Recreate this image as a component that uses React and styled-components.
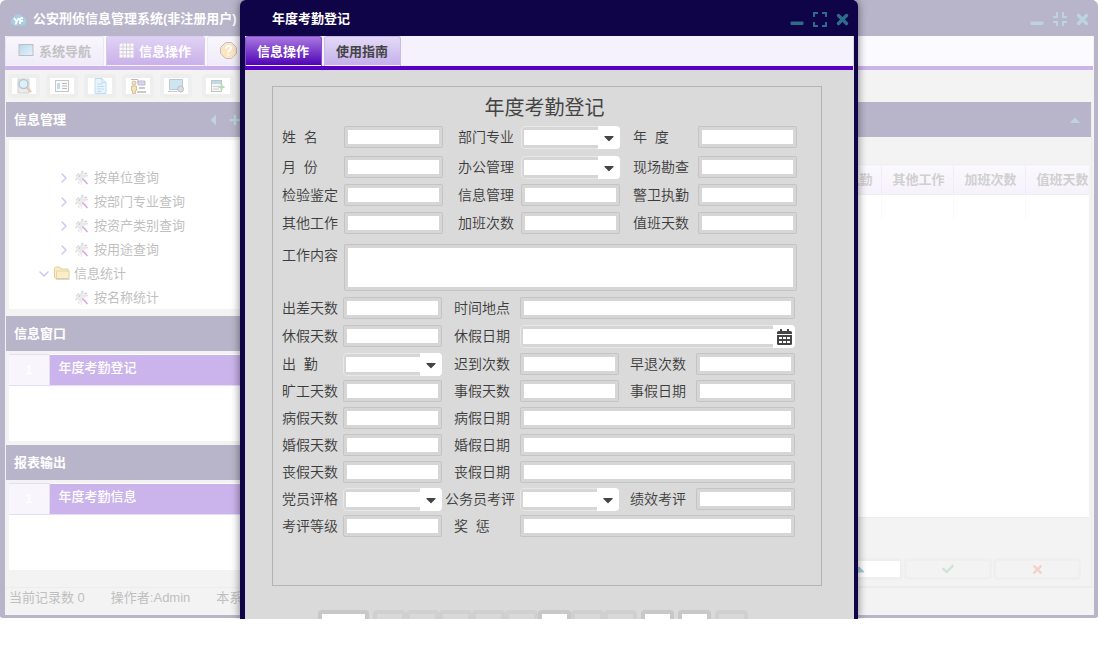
import React, { useState } from 'react'
import styled, { createGlobalStyle, css } from 'styled-components'
import {
  FaCaretDown,
  FaCaretLeft,
  FaCaretUp,
  FaCheck,
  FaPlus,
  FaTimes,
} from 'react-icons/fa'
import { ChevronDown, ChevronRight } from 'lucide-react'

//#region styles
const GlobalStyle = createGlobalStyle`
  * {
    box-sizing: border-box;
  }

  body {
    margin: 0;
    background: #fff;
    color: #444;
    font: 13px/20px 'Liberation Sans', 'Noto Sans CJK SC', sans-serif;
  }

  button, input, select, textarea {
    margin: 0;
    padding: 0;
    border: 0;
    border-radius: 0;
    font: inherit;
    color: inherit;
    background: none;
  }
`

const Desktop = styled.div`
  position: relative;
  overflow: hidden;
  padding-bottom: 1px;
`

const AppWindow = styled.div`
  margin-right: 1px;
  border: solid #b8b5ca;
  border-width: 0 4px 3px 5px;
  border-radius: 6px 6px 3px 3px;
  background: #f3f3f3;
`

const TitleBar = styled.header`
  display: flex;
  align-items: center;
  height: 36px;
  padding: ${(p) => (p.$dialog ? '2px 5px 0 27px' : '2px 5px 0 5px')};
  background: ${(p) => (p.$dialog ? '#100448' : '#b8b5ca')};
  color: #fff;

  > h1 {
    flex: 1;
    margin: 0;
    font-size: 13px;
    font-weight: bold;
    white-space: nowrap;
  }

  > svg {
    margin-right: 6px;
  }
`

const WindowButtons = styled.div`
  display: flex;
  gap: 8px;
  color: ${(p) => (p.$dialog ? '#2c6d8c' : '#bcd4de')};

  > button {
    display: flex;
  }
`

const TabBar = styled.nav`
  display: flex;
  gap: 2px;
  height: 34px;
  margin-right: 1px;
  border-bottom: 4px solid ${(p) => (p.$dialog ? '#5500c3' : '#cbb4eb')};
  background: ${(p) => (p.$dialog ? '#f5f2fd' : '#fbfafe')};
`

const tabLooks = {
  active: css`
    background: linear-gradient(#a878e0, #4c00b4);
    border-color: #8a50d0;
    color: #fff;
  `,
  idle: css`
    background: linear-gradient(#e4daf7, #c4aeea);
    border-color: #cbb8ec;
    color: #444;
  `,
  fadedActive: css`
    background: linear-gradient(#e0d2f4, #c8b0e9);
    border-color: #d9c9f1;
    color: #fff;
  `,
  fadedIdle: css`
    background: linear-gradient(#f9f7fd, #efeaf9);
    border-color: #ebe5f7;
    color: #c2c2c2;
  `,
}

const Tab = styled.button`
  display: flex;
  align-items: center;
  gap: 5px;
  height: 30px;
  width: ${(p) => (p.$small ? '77px' : '99px')};
  padding-left: ${(p) => (p.$small ? '11px' : '12px')};
  border: 1px solid;
  border-bottom: 0;
  border-radius: 3px 3px 0 0;
  box-shadow: inset 0 -1px #f5f2fd;
  font-weight: bold;
  white-space: nowrap;
  ${(p) => tabLooks[p.$look]}
`

const Toolbar = styled.div`
  display: flex;
  gap: 6px;
  height: 32px;
  padding: 4px 3px;

  > :last-child {
    margin-left: 4px;
  }
`

const ToolButton = styled.button`
  display: flex;
  align-items: center;
  justify-content: center;
  width: 32px;
  height: 24px;
  border: 4px solid #eee;
  border-radius: 4px;
  background: #fff;
`

const Workspace = styled.div`
  display: flex;
  padding: 0 2px 0 1px;
`

const Sidebar = styled.aside`
  width: 243px;
`

const PanelHeader = styled.div`
  display: flex;
  align-items: center;
  gap: 8px;
  height: 35px;
  padding: 0 8px;
  background: #b8b5ca;
  color: #bcd4de;

  > h2 {
    flex: 1;
    margin: 0;
    color: #fff;
    font-size: 13px;
  }
`

const Tree = styled.ul`
  margin: 3px 0 7px 3px;
  padding: 26px 0 0;
  height: 169px;
  background: #fff;
  list-style: none;
  color: #bfbfbf;
`

const TreeItem = styled.li`
  display: flex;
  align-items: center;
  height: 24px;
  padding-left: ${(p) => (p.$level === 2 ? '46px' : '26px')};

  > span {
    display: flex;
    justify-content: center;
    width: 18px;
    margin-right: 1px;
    color: #cfc1f2;
  }

  > svg {
    margin-right: 4px;
  }
`

const RowList = styled.div`
  height: 87px;
  margin: 3px 0 4px 3px;
  background: #fff;

  table {
    width: 100%;
    border-collapse: collapse;
  }

  th {
    width: 40px;
    height: 31px;
    padding: 0;
    border: solid #e6def4;
    border-width: 1px 1px 1px 0;
    background: #f8f5fd;
    color: #fff;
  }

  td {
    padding: 0 9px 3px;
    border-bottom: 1px solid #e6def4;
    background: #cbb4eb;
    color: #fff;
    font-weight: 500;
  }
`

const Records = styled.section`
  display: flex;
  flex: 1;
  flex-direction: column;
  min-width: 0;
  border: solid #ececec;
  border-width: 0 1px 1px 0;
`

const RecordsGrid = styled.div`
  flex: 1;
  min-height: 354px;
  margin: 27px 2px 0 3px;
  overflow: hidden;
  border-bottom: 1px solid #ebebeb;
  background: #fff;

  table {
    width: calc(100% + 8px);
    table-layout: fixed;
    border-collapse: collapse;
  }

  th,
  td {
    width: 72px;
    height: 25px;
    padding: 0;
    border-left: 1px solid #fafafa;
  }

  th:first-child {
    width: auto;
  }

  th {
    height: 30px;
    padding-left: 11px;
    border: solid #f1edf8;
    border-width: 1px 0 1px 1px;
    background: linear-gradient(#faf9fd, #f6f2fb);
    color: #d0d0d0;
    text-align: left;
    white-space: nowrap;
  }
`

const RecordsFooter = styled.div`
  display: flex;
  justify-content: flex-end;
  gap: 1px;
  padding: 40px 10px 6px;
`

const FooterButton = styled.button`
  display: flex;
  align-items: center;
  justify-content: center;
  width: 88px;
  height: 22px;
  border: 3px solid #efefef;
  border-radius: 4px;
  background: ${(p) => (p.$filled ? '#fff' : '#f3f3f3')};
  color: ${(p) => p.$color};
`

const StatusBar = styled.footer`
  display: flex;
  gap: 26px;
  height: 28px;
  padding: 0 4px;
  border-top: 1px solid #ececec;
  color: #bfbfbf;
  line-height: 20px;
`

/* dialog */
const Overlay = styled.div`
  position: absolute;
  inset: 0 1px 0 0;
  display: flex;
  justify-content: center;
`

const Dialog = styled.section`
  flex: 0 1 618px;
  border: solid #100448;
  border-width: 0 4px 0 5px;
  border-radius: 6px 6px 0 0;
  background: #dadada;
  box-shadow: 0 0 8px rgba(0, 0, 0, 0.5);
`

const FormSheet = styled.form`
  height: 500px;
  margin: 16px 32px 24px 27px;
  padding: 10px 24px 0 9px;
  border: 1px solid #b4b4b4;

  > h2 {
    margin: 0 -10px 6px 0;
    font-size: 20px;
    line-height: 23px;
    font-weight: 400;
    text-align: center;
  }
`

const FieldGrid = styled.div`
  display: grid;
  grid-template-columns: 62px 1fr 78px 1fr 78px 1fr;
  grid-template-rows: 30px 28px 28px 32px 53px;
  font-size: 14px;
`

const LowerGrid = styled(FieldGrid)`
  grid-template-columns: 61px 1fr 78px 1fr 77px 1fr;
  grid-template-rows: 28px 28px repeat(7, 27px);
  margin-right: 2px;
`

const FieldLabel = styled.label`
  height: 22px;
  padding-left: ${(p) => p.$indent || 0}px;
  color: #3c3c3c;
  font-weight: 350;
  line-height: 22px;
  white-space: pre;
`

const box = css`
  border: 3px solid #d6d6d6;
  box-shadow: 0 0 0 1px #c4c4c4;
  border-radius: 1px;
  background: #fff;
  outline: none;
`

const TextInput = styled.input`
  ${box}
  width: calc(100% - 2px);
  height: 20px;
  margin: 1px;
  grid-column: span ${(p) => p.$span || 1};
`

const TextArea = styled.textarea`
  ${box}
  grid-column: span 5;
  height: 45px;
  margin: 1px;
  resize: none;
`

const ComboBox = styled.div`
  display: flex;
  height: 23px;
  grid-column: span ${(p) => p.$span || 1};
  border: 1px solid #e8e8e8;
  border-radius: 4px;
  background: #d6d6d6;

  > select,
  > input {
    flex: 1;
    min-width: 0;
    margin: 3px 0 3px 2px;
    appearance: none;
    background: #fff;
    outline: none;
  }

  > span {
    display: flex;
    align-items: center;
    justify-content: center;
    width: 22px;
    margin: -1px;
    border-radius: 0 4px 4px 0;
    background: #fff;
  }
`

const Pager = styled.div`
  display: flex;
  padding-left: 73px;
`

const PagerButton = styled.button`
  width: ${(p) => (p.$wide ? '51px' : '33px')};
  height: 24px;
  margin-right: ${(p) => (p.$gap ? '4px' : 0)};
  border: 4px solid #c8c8c8;
  border-radius: 4px;
  background: #fff;

  &:disabled {
    border-color: #d0d0d0;
    background: #d9d9d9;
  }
`
//#endregion

//#region icons
const MinimizeIcon = () => (
  <svg width="14" height="16" viewBox="0 0 14 16">
    <rect x="0.5" y="10.5" width="13" height="3.5" rx="1" fill="currentColor" />
  </svg>
)

const ExpandIcon = () => (
  <svg width="16" height="16" viewBox="0 0 16 16" fill="none" stroke="currentColor" strokeWidth="2">
    <path d="M2 6V2h4M10 2h4v4M14 11v4h-4M6 15H2v-4" />
  </svg>
)

const CompressIcon = () => (
  <svg width="16" height="16" viewBox="0 0 16 16" fill="none" stroke="currentColor" strokeWidth="2">
    <path d="M1 6h4V1M11 1v5h4M15 11h-4v4M5 15v-4H1" />
  </svg>
)

const CloseIcon = () => (
  <svg width="13" height="16" viewBox="0 0 13 16" stroke="currentColor" strokeWidth="3.4" strokeLinecap="round">
    <path d="M2.500 4.500l8 8M10.500 4.500l-8 8" />
  </svg>
)

const CloudLogo = () => (
  <svg width="17" height="13" viewBox="0 0 16 13">
    <path
      d="M4 12.500a4 4 0 0 1-1-7.700A5 5 0 0 1 12.300 4a4.300 4.300 0 0 1-.3 8.500z"
      fill="#a4cfe6"
    />
    <path
      d="M3.500 5l2.500 3.500L8.500 5M6.500 8L5 11.500M9.500 11V6.500q0-1.500 3-1.500M9.500 8h3"
      fill="none"
      stroke="#fff"
      strokeWidth="1.800"
    />
  </svg>
)

const ScreenIcon = () => (
  <svg width="16" height="18" viewBox="0 0 16 18">
    <defs>
      <linearGradient id="screen" x1="0" y1="0" x2="1" y2="1">
        <stop offset="0" stopColor="#b8d9ee" />
        <stop offset="1" stopColor="#e4f2fa" />
      </linearGradient>
    </defs>
    <rect x="1" y="1.500" width="14" height="11" fill="url(#screen)" stroke="#bdbdc4" />
  </svg>
)

const SheetIcon = () => (
  <svg width="15" height="17" viewBox="0 0 15 17">
    <path d="M2 .5h12.500v14H.5V2z" fill="#fbf9fd" />
    <path d="M4 0v15M7.500 0v15M11 0v15M0 4h15M0 7.500h15M0 11h15" stroke="#d6d0da" />
  </svg>
)

const HelpIcon = () => (
  <svg width="17" height="19" viewBox="0 0 17 19">
    <path d="M5.500.5h6l5 5v6l-5 5h-6l-5-5v-6z" fill="#fbe6c4" stroke="#c9bcc0" />
    <path
      d="M6 6.500q.3-2.500 2.600-2.500T11 6.200Q11 7.500 8.500 9v1.500M8.500 12v1.500"
      fill="none"
      stroke="#fff"
      strokeWidth="1.800"
    />
  </svg>
)

const toolIcons = {
  search: (
    <>
      <path d="M2 1h11v14H2z" fill="#ececec" stroke="#d0d0d0" />
      <circle cx="7.500" cy="6" r="4.500" fill="#dff1f8" stroke="#b4c8d2" strokeWidth="1.500" />
      <path d="M11 9.500l4 4.500" stroke="#edc4b8" strokeWidth="2.500" />
    </>
  ),
  list: (
    <>
      <rect x="1.500" y="2.500" width="13" height="11" fill="#fafafa" stroke="#c6c6c6" />
      <path d="M3 5h3v6H3z" fill="#c4dcea" />
      <path d="M8 5.500h5M8 8h5M8 10.500h5" stroke="#bcbcbc" />
    </>
  ),
  page: (
    <>
      <path d="M3 .5h7l4 4v11H3z" fill="#e8f4fc" stroke="#bfdcee" />
      <path d="M10 .5v4h4M5 6h6M5 8.500h7M5 11h7M5 13.500h4" fill="none" stroke="#bfdcee" />
    </>
  ),
  user: (
    <>
      <path d="M8 3h7v4H8z" fill="#d8d2f6" stroke="#bdbdc8" />
      <path d="M9 10h6M7 14h9" stroke="#c9c9c9" strokeWidth="2" />
      <path d="M1 1.500h7M8 2v3" stroke="#c0b8b4" />
      <circle cx="4" cy="5" r="2" fill="#f3dfbe" stroke="#d0bf9f" />
      <path d="M1.500 8h5v4.500H5.500V15.500h-3V12.500h-1z" fill="#f7e2b6" stroke="#d3c19c" />
    </>
  ),
  monitor: (
    <>
      <path d="M1.500 1.500h13v10h-13z" fill="#cfe5f2" stroke="#bcc8d0" />
      <path d="M0 13.500h9" stroke="#c6c6c6" />
      <circle cx="12.500" cy="11" r="3" fill="#cfe5cf" stroke="#c9b3dd" />
    </>
  ),
  add: (
    <>
      <rect x="1.500" y="2.500" width="10" height="11" fill="#f5f5f5" stroke="#c4c4c4" />
      <path d="M2 4.500h9" stroke="#bcdcec" strokeWidth="3" />
      <path d="M3 8.500h6M3 11h6" stroke="#d0d0d0" />
      <path d="M11.500 6v6M8.500 9h6" stroke="#b9dcb4" strokeWidth="2" />
    </>
  ),
}

const ToolIcon = ({ name }) => (
  <svg width="16" height="16" viewBox="0 0 16 16" fill="none">
    {toolIcons[name]}
  </svg>
)

const WandIcon = () => (
  <svg width="16" height="16" viewBox="0 0 16 16" fill="none">
    <path d="M3 4l4-1 2-2 2 2 2 1-1 3-2 1-1 3-2 2-3-3-2-2z" fill="#ebebeb" />
    <path
      d="M2.500 5.500l2-2M7 2.500l2-1.500M11 3l2 .5M13 5v1.500M2 8.500v1.500M4 12l1 1.500M7 14h1M6 5l-1 2"
      stroke="#c9c9c9"
    />
    <path d="M8.500 8.500l5 5.500" stroke="#d9a6e8" strokeWidth="1.600" />
  </svg>
)

const FolderIcon = () => (
  <svg width="16" height="16" viewBox="0 0 16 16">
    <path d="M.5 11.500V2.500l1-1.500h4l1.500 2h7v2h1v7.500H2z" fill="#fbeec6" stroke="#dccfa4" />
    <path d="M2.500 12V5h12" fill="none" stroke="#e3d6a8" />
    <path d="M2 13.300h13.500" stroke="#cfcfcf" />
  </svg>
)

const CalendarIcon = () => (
  <svg width="15" height="16" viewBox="0 0 15 16" fill="#444">
    <path d="M3 0h2v2h5V0h2v2h1.500Q15 2 15 3.500V5H0V3.500Q0 2 1.500 2H3zM0 6h15v8.500q0 1.500-1.500 1.500h-12Q0 16 0 14.500z" />
    <path d="M2 8h3v2H2zM6 8h3v2H6zM10 8h3v2h-3zM2 12h3v2H2zM6 12h3v2H6zM10 12h3v2h-3z" fill="#fff" />
  </svg>
)
//#endregion

const treeItems = [
  { text: '按单位查询', level: 2, arrow: 'right' },
  { text: '按部门专业查询', level: 2, arrow: 'right' },
  { text: '按资产类别查询', level: 2, arrow: 'right' },
  { text: '按用途查询', level: 2, arrow: 'right' },
  { text: '信息统计', level: 1, arrow: 'down' },
  { text: '按名称统计', level: 2 },
]

const upperFields = [
  { label: '姓  名' },
  { label: '部门专业', type: 'select', indent: 15 },
  { label: '年  度', indent: 13 },
  { label: '月  份' },
  { label: '办公管理', type: 'select', indent: 15 },
  { label: '现场勘查', indent: 13 },
  { label: '检验鉴定' },
  { label: '信息管理', indent: 15 },
  { label: '警卫执勤', indent: 13 },
  { label: '其他工作' },
  { label: '加班次数', indent: 15 },
  { label: '值班天数', indent: 13 },
  { label: '工作内容', type: 'area' },
]

const lowerFields = [
  { label: '出差天数' },
  { label: '时间地点', indent: 12, span: 3 },
  { label: '休假天数' },
  { label: '休假日期', type: 'date', indent: 12, span: 3 },
  { label: '出  勤', type: 'select' },
  { label: '迟到次数', indent: 12 },
  { label: '早退次数', indent: 11 },
  { label: '旷工天数' },
  { label: '事假天数', indent: 12 },
  { label: '事假日期', indent: 11 },
  { label: '病假天数' },
  { label: '病假日期', indent: 12, span: 3 },
  { label: '婚假天数' },
  { label: '婚假日期', indent: 12, span: 3 },
  { label: '丧假天数' },
  { label: '丧假日期', indent: 12, span: 3 },
  { label: '党员评格', type: 'select' },
  { label: '公务员考评', type: 'select', indent: 3 },
  { label: '绩效考评', indent: 11 },
  { label: '考评等级' },
  { label: '奖  惩', indent: 12, span: 3 },
]

function Field({ id, label, type, indent, span }) {
  let control = <TextInput id={id} $span={span} />
  if (type === 'area') control = <TextArea id={id} />
  if (type === 'select') {
    control = (
      <ComboBox>
        <select id={id} />
        <span>
          <FaCaretDown size={16} />
        </span>
      </ComboBox>
    )
  }
  if (type === 'date') {
    control = (
      <ComboBox $span={span}>
        <input id={id} />
        <span>
          <CalendarIcon />
        </span>
      </ComboBox>
    )
  }

  return (
    <>
      <FieldLabel htmlFor={id} $indent={indent}>
        {label}
      </FieldLabel>
      {control}
    </>
  )
}

function InfoRows({ text }) {
  return (
    <RowList>
      <table>
        <tbody>
          <tr>
            <th>1</th>
            <td>{text}</td>
          </tr>
        </tbody>
      </table>
    </RowList>
  )
}

function MainWindow() {
  return (
    <AppWindow>
      <TitleBar>
        <CloudLogo />
        <h1>公安刑侦信息管理系统(非注册用户)</h1>
        <WindowButtons>
          <button><MinimizeIcon /></button>
          <button><CompressIcon /></button>
          <button><CloseIcon /></button>
        </WindowButtons>
      </TitleBar>
      <TabBar>
        <Tab $look="fadedIdle"><ScreenIcon />系统导航</Tab>
        <Tab $look="fadedActive"><SheetIcon />信息操作</Tab>
        <Tab $look="fadedIdle"><HelpIcon /></Tab>
      </TabBar>
      <Toolbar>
        {Object.keys(toolIcons).map((name) => (
          <ToolButton key={name}>
            <ToolIcon name={name} />
          </ToolButton>
        ))}
      </Toolbar>
      <Workspace>
        <Sidebar>
          <PanelHeader>
            <h2>信息管理</h2>
            <FaCaretLeft size={16} />
            <FaPlus size={12} />
          </PanelHeader>
          <Tree>
            {treeItems.map(({ text, level, arrow }) => (
              <TreeItem key={text} $level={level}>
                <span>
                  {arrow === 'right' && <ChevronRight size={16} />}
                  {arrow === 'down' && <ChevronDown size={16} />}
                </span>
                {level === 1 ? <FolderIcon /> : <WandIcon />}
                {text}
              </TreeItem>
            ))}
          </Tree>
          <PanelHeader>
            <h2>信息窗口</h2>
          </PanelHeader>
          <InfoRows text="年度考勤登记" />
          <PanelHeader>
            <h2>报表输出</h2>
          </PanelHeader>
          <InfoRows text="年度考勤信息" />
        </Sidebar>
        <Records>
          <PanelHeader>
            <h2> </h2>
            <FaCaretUp size={16} />
          </PanelHeader>
          <RecordsGrid>
            <table>
              <thead>
                <tr>
                  <th />
                  <th>警卫执勤</th>
                  <th>其他工作</th>
                  <th>加班次数</th>
                  <th>值班天数</th>
                </tr>
              </thead>
              <tbody>
                <tr>
                  <td /><td /><td /><td /><td />
                </tr>
              </tbody>
            </table>
          </RecordsGrid>
          <RecordsFooter>
            <FooterButton $filled $color="#a9cdd6"><FaCaretUp size={18} /></FooterButton>
            <FooterButton $color="#cde5d6"><FaCheck size={12} /></FooterButton>
            <FooterButton $color="#f5d0cd"><FaTimes size={13} /></FooterButton>
          </RecordsFooter>
        </Records>
      </Workspace>
      <StatusBar>
        <span>当前记录数 0</span>
        <span>操作者:Admin</span>
        <span>本系统</span>
      </StatusBar>
    </AppWindow>
  )
}

function AttendanceDialog() {
  const [tab, setTab] = useState('信息操作')

  return (
    <Dialog>
      <TitleBar $dialog>
        <h1>年度考勤登记</h1>
        <WindowButtons $dialog>
          <button><MinimizeIcon /></button>
          <button><ExpandIcon /></button>
          <button><CloseIcon /></button>
        </WindowButtons>
      </TitleBar>
      <TabBar $dialog>
        {['信息操作', '使用指南'].map((name) => (
          <Tab
            key={name}
            $small
            $look={tab === name ? 'active' : 'idle'}
            onClick={() => setTab(name)}
          >
            {name}
          </Tab>
        ))}
      </TabBar>
      <FormSheet>
        <h2>年度考勤登记</h2>
        <FieldGrid>
          {upperFields.map((field, i) => (
            <Field key={field.label} id={`upper-${i}`} {...field} />
          ))}
        </FieldGrid>
        <LowerGrid>
          {lowerFields.map((field, i) => (
            <Field key={field.label} id={`lower-${i}`} {...field} />
          ))}
        </LowerGrid>
      </FormSheet>
      <Pager>
        <PagerButton $wide $gap />
        <PagerButton disabled />
        <PagerButton disabled />
        <PagerButton disabled />
        <PagerButton disabled />
        <PagerButton disabled />
        <PagerButton />
        <PagerButton disabled />
        <PagerButton disabled $gap />
        <PagerButton $gap />
        <PagerButton $gap />
        <PagerButton disabled />
      </Pager>
    </Dialog>
  )
}

function App() {
  return (
    <>
      <GlobalStyle />
      <Desktop>
        <MainWindow />
        <Overlay>
          <AttendanceDialog />
        </Overlay>
      </Desktop>
    </>
  )
}

export default App
